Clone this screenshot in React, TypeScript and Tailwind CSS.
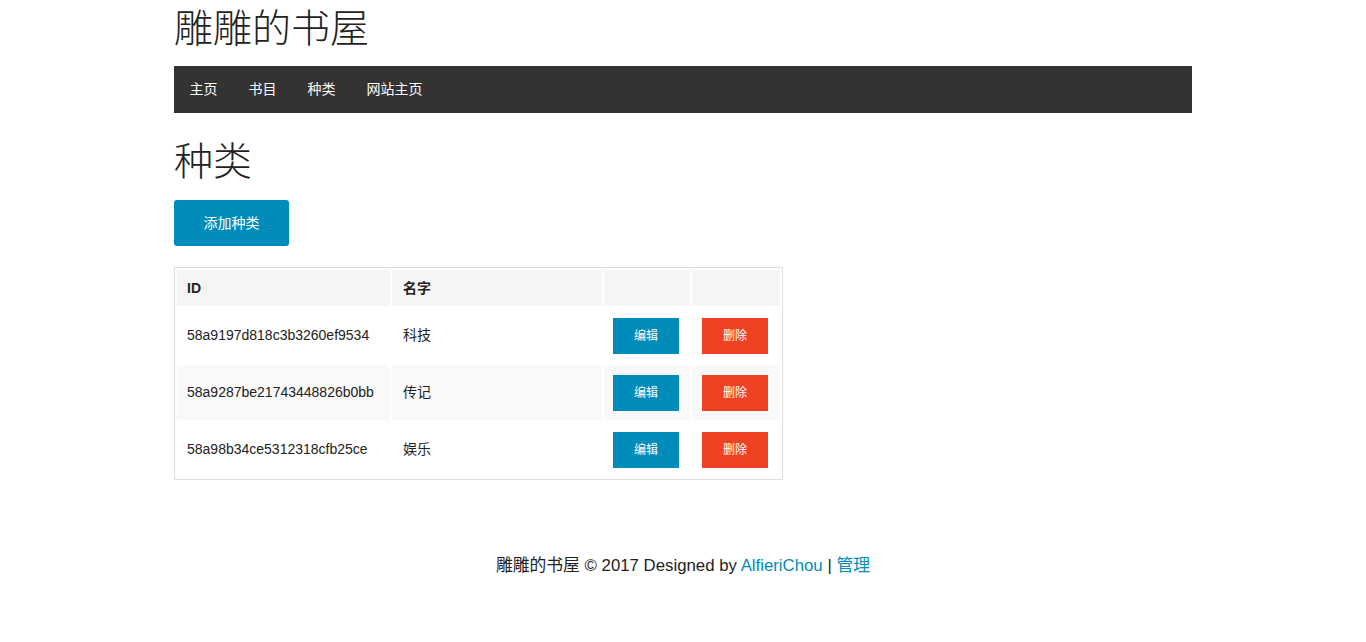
const categories = [
  { id: "58a9197d818c3b3260ef9534", name: "科技" },
  { id: "58a9287be21743448826b0bb", name: "传记" },
  { id: "58a98b34ce5312318cfb25ce", name: "娱乐" },
];

const navItems = ["主页", "书目", "种类", "网站主页"];

export default function App() {
  return (
    <div className="min-h-[642px] bg-white font-['Liberation_Sans','Noto_Sans_CJK_SC',sans-serif] text-[#222]">
      <div className="mx-auto w-[1018px]">
        {/* Title */}
        <h1 className="pt-[4px] font-['Liberation_Serif','Noto_Sans_CJK_SC',serif] text-[39px] font-light leading-[50px] text-[#222]">
          雕雕的书屋
        </h1>

        {/* Nav */}
        <nav className="mt-[12px] flex h-[47px] items-center bg-[#333]">
          {navItems.map((item) => (
            <a key={item} href="#" className="px-[15.5px] text-[14px] text-white">
              {item}
            </a>
          ))}
        </nav>

        {/* Content */}
        <h2 className="mt-[20px] font-['Liberation_Serif','Noto_Sans_CJK_SC',serif] text-[39px] font-light leading-[58px] text-[#222]">
          种类
        </h2>

        <button className="mt-[9px] flex h-[46px] w-[115px] items-center justify-center rounded-[3px] bg-[#008cba] text-[14px] text-white">
          添加种类
        </button>

        <table className="mt-[21px] w-[609px] border-separate border-spacing-[2px] border border-[#ddd] bg-white text-[14px]">
          <thead>
            <tr className="h-[36px] bg-[#f5f5f5]">
              <th className="w-[213px] bg-[#f5f5f5] pl-[10px] text-left font-bold text-[#222]">ID</th>
              <th className="w-[210px] bg-[#f5f5f5] pl-[11px] text-left font-bold text-[#222]">名字</th>
              <th className="w-[86px] bg-[#f5f5f5]"></th>
              <th className="bg-[#f5f5f5]"></th>
            </tr>
          </thead>
          <tbody>
            {categories.map((c, i) => (
              <tr key={c.id} className={i % 2 === 1 ? "h-[55px] bg-[#f9f9f9]" : "h-[55px] bg-white"}>
                <td className="pl-[10px] text-[#222]">{c.id}</td>
                <td className="pl-[11px] text-[#222]">{c.name}</td>
                <td className="pl-[9px]">
                  <a href="#" className="flex h-[36px] w-[66px] items-center justify-center bg-[#008cba] text-[12px] text-white">
                    编辑
                  </a>
                </td>
                <td className="pl-[10px]">
                  <a href="#" className="flex h-[36px] w-[66px] items-center justify-center bg-[#f04124] text-[12px] text-white">
                    删除
                  </a>
                </td>
              </tr>
            ))}
          </tbody>
        </table>
      </div>

      {/* Footer */}
      <footer className="mt-[74px] text-center text-[16.8px] leading-[24px] text-[#222]">
        雕雕的书屋 © 2017 Designed by{" "}
        <a href="#" className="text-[#008cba]">AlfieriChou</a> |{" "}
        <a href="#" className="text-[#008cba]">管理</a>
      </footer>
    </div>
  );
}
